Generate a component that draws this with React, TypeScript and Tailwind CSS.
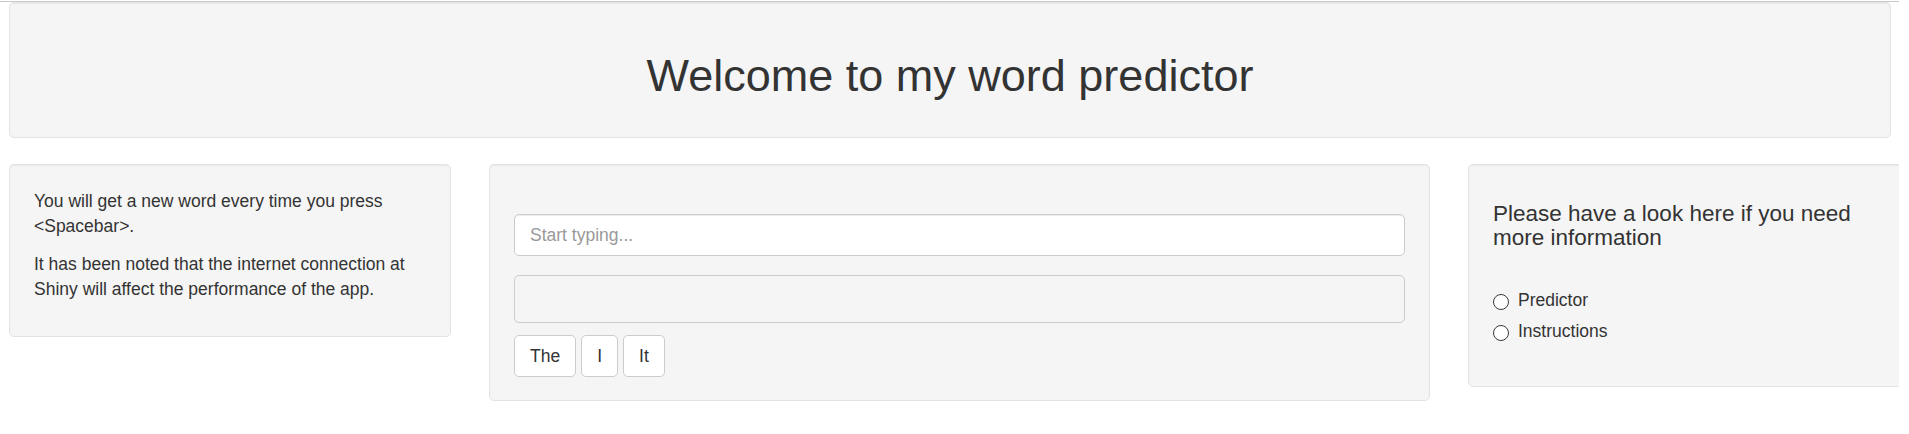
const well =
  "box-border rounded-[5px] border border-[#e3e3e3] bg-[#f5f5f5] shadow-[inset_0_1px_1px_rgba(0,0,0,0.05)]";

function Radio({ label }: { label: string }) {
  return (
    <label className="flex h-[25px] items-center">
      <span className="mt-[2px] box-border h-[16px] w-[16px] shrink-0 rounded-full border border-[#3a3a3a] bg-white" />
      <span className="ml-[9px] leading-[25px]">{label}</span>
    </label>
  );
}

export default function App() {
  return (
    <div className="w-[1899px] overflow-hidden bg-white font-['Liberation_Sans',Arial,sans-serif] text-[#333]">
      {/* top edge line */}
      <div className="mt-px h-px bg-[#c8c8c8]" />

      {/* title panel */}
      <div className={`${well} ml-[9px] h-[136px] w-[1882px] pt-[48px]`}>
        <h1 className="text-center text-[45px] leading-[50px] font-normal">
          Welcome to my word predictor
        </h1>
      </div>

      <div className="ml-[9px] mt-[26px] flex items-start gap-[38px]">
        {/* left sidebar */}
        <div className={`${well} h-[173px] w-[442px] shrink-0 px-[24px] pt-[24px] text-[17.5px] leading-[25px]`}>
          <p className="mb-[12.5px]">You will get a new word every time you press &lt;Spacebar&gt;.</p>
          <p>It has been noted that the internet connection at Shiny will affect the performance of the app.</p>
        </div>

        {/* main input */}
        <div className={`${well} w-[941px] shrink-0 px-[24px] pt-[24px] pb-[23px]`}>
          <div className="h-[25px]" />
          <input
            type="text"
            placeholder="Start typing..."
            className="box-border block h-[42px] w-full rounded-[5px] border border-[#ccc] bg-white px-[15px] text-[17.5px] text-[#555] shadow-[inset_0_1px_1px_rgba(0,0,0,0.075)] outline-none placeholder:text-[#999]"
          />
          <div className="mt-[19px] box-border h-[48px] w-full rounded-[5px] border border-[#ccc] bg-[#f5f5f5]" />
          <div className="mt-[12px] flex gap-[5px]">
            {["The", "I", "It"].map((w) => (
              <button
                key={w}
                className="box-border h-[42px] rounded-[5px] border border-[#ccc] bg-white px-[15px] text-[17.5px] text-[#333]"
              >
                {w}
              </button>
            ))}
          </div>
        </div>

        {/* info panel */}
        <div className={`${well} h-[223px] w-[442px] shrink-0 px-[24px] pt-[24px] text-[17.5px]`}>
          <h4 className="mt-[12.5px] text-[22.5px] leading-[24.75px] font-normal">
            Please have a look here if you need more information
          </h4>
          <div className="mt-[37px] flex flex-col gap-[6px]">
            <Radio label="Predictor" />
            <Radio label="Instructions" />
          </div>
        </div>
      </div>
    </div>
  );
}
